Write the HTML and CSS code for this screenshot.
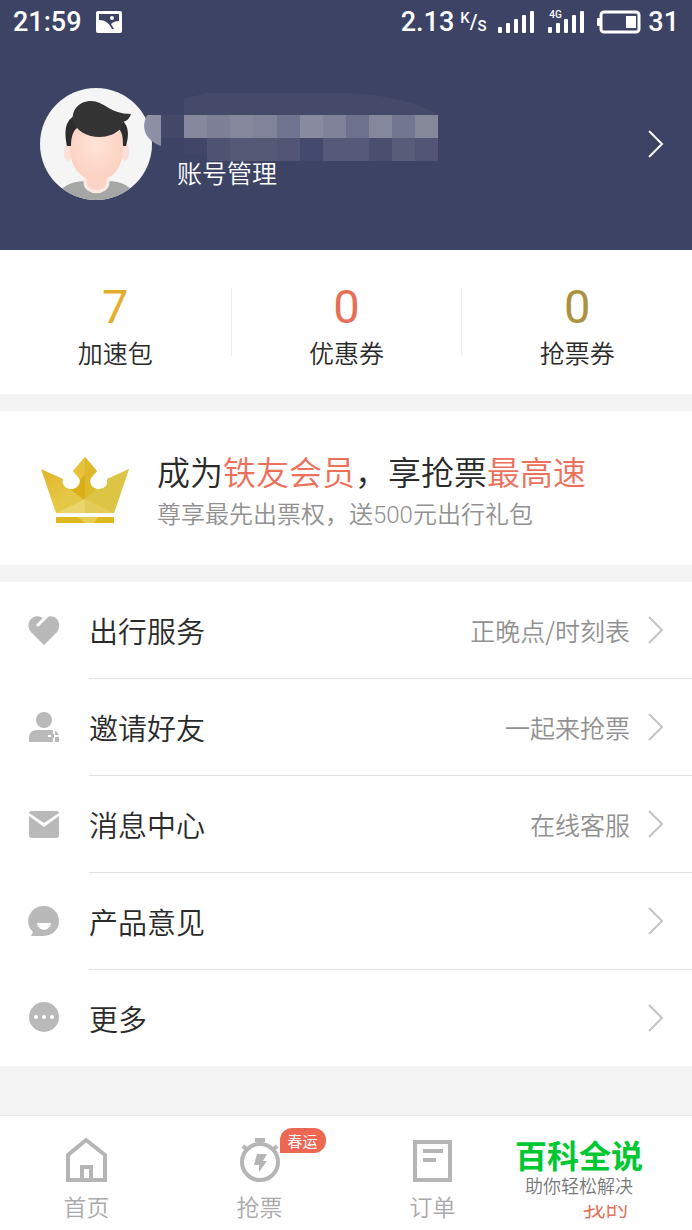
FILE: index.html
```html
<!DOCTYPE html>
<html lang="zh-CN">
<head>
<meta charset="utf-8">
<meta name="viewport" content="width=device-width, initial-scale=1">
<title>我的</title>
<link rel="stylesheet" href="styles.css">
</head>
<body>
<div class="app">
  <header class="header">
    <div class="status">
      <div class="status-group">
        <span>21:59</span>
        <svg class="status-picture" width="26" height="22" viewBox="0 0 26 22" aria-hidden="true">
          <rect width="26" height="22" rx="2" fill="#fff"/>
          <path d="M3 3H23V10C20 10 17 11 15 13L18 18L16 18C13 12 9 9 3 9Z" fill="#3d4365"/>
          <circle cx="16" cy="7" r="2" fill="#fff"/>
        </svg>
      </div>
      <div class="status-group">
        <span>2.13</span>
        <span class="rate"><span class="rate-top">K</span><span class="rate-slash">/</span><span class="rate-bottom">S</span></span>
        <svg class="signal" width="36" height="24" viewBox="0 0 36 24" fill="#fff" aria-hidden="true">
          <rect x="0" y="17" width="4" height="6" rx="1"/><rect x="8" y="13" width="4" height="10" rx="1"/><rect x="16" y="9" width="4" height="14" rx="1"/><rect x="24" y="5" width="4" height="18" rx="1"/><rect x="32" y="1" width="4" height="22" rx="1"/>
        </svg>
        <span class="signal-4g">
          <svg width="36" height="24" viewBox="0 0 36 24" fill="#fff" aria-hidden="true">
            <rect x="0" y="17" width="4" height="6" rx="1"/><rect x="8" y="13" width="4" height="10" rx="1"/><rect x="16" y="9" width="4" height="14" rx="1"/><rect x="24" y="5" width="4" height="18" rx="1"/><rect x="32" y="1" width="4" height="22" rx="1"/>
          </svg>
          <span class="signal-tag">4G</span>
        </span>
        <svg class="battery" width="44" height="24" viewBox="0 0 44 24" aria-hidden="true">
          <rect x="4" y="2" width="38" height="20" rx="3" fill="none" stroke="#fff" stroke-width="3"/>
          <rect x="0" y="8" width="4" height="8" rx="1" fill="#fff"/>
          <rect x="29" y="6" width="10" height="12" fill="#fff"/>
        </svg>
        <span>31</span>
      </div>
    </div>
    <a class="profile" href="#account">
      <svg class="avatar" width="112" height="112" viewBox="0 0 112 112" aria-hidden="true">
        <defs>
          <clipPath id="face-clip"><circle cx="56" cy="56" r="56"/></clipPath>
          <radialGradient id="skin" cx="50%" cy="45%" r="60%"><stop offset="0" stop-color="#ffe3d8"/><stop offset="1" stop-color="#fbd0bf"/></radialGradient>
        </defs>
        <g clip-path="url(#face-clip)">
          <rect width="112" height="112" fill="#f5f5f6"/>
          <path d="M14 112C20 98 32 93 46 93H67C82 93 92 98 98 112Z" fill="#a5a6a6"/>
          <path d="M45 88V94C45 107 68 107 68 94V88Z" fill="#fbd3c4" stroke="#fcebe4" stroke-width="3"/>
          <ellipse cx="28" cy="64" rx="4" ry="9" fill="#fce0d5"/><ellipse cx="85" cy="64" rx="4" ry="9" fill="#fce0d5"/>
          <path d="M30 56C30 36 40 31 57 31S83 36 83 56C84 81 72 92 57 92S29 81 30 56Z" fill="url(#skin)"/>
          <path d="M36 27C25 32 24 43 27 58H31C31 49 33 43 37 40ZM83 33C89 39 89 48 86 58H83C83 49 82 44 79 41Z" fill="#2c2c2d"/>
          <path d="M33 34C31 22 39 13 51 13C64 13 70 26 91 26C89 32 85 34 82 34C86 37 76 49 60 49C45 49 37 42 33 34Z" fill="#333334"/>
        </g>
      </svg>
      <span class="profile-text">账号管理</span>
      <svg class="mosaic" width="296" height="68" viewBox="0 0 296 68" aria-hidden="true">
        <path d="M41 6 64 0H205C240 2 273 8 295 22H41Z" fill="#454a6a"/>
        <path d="M4 22H18V53C6 49 -4 38 4 22Z" fill="#8d8fa4"/>
        <rect x="18" y="22" width="23" height="23" fill="#444969"/>
        <rect x="41" y="22" width="23" height="23" fill="#85889d"/><rect x="64" y="22" width="23" height="23" fill="#7d8096"/><rect x="87" y="22" width="23" height="23" fill="#85889b"/><rect x="110" y="22" width="24" height="23" fill="#808399"/><rect x="134" y="22" width="23" height="23" fill="#707490"/><rect x="157" y="22" width="23" height="23" fill="#898c9f"/><rect x="180" y="22" width="23" height="23" fill="#7f8298"/><rect x="203" y="22" width="23" height="23" fill="#6e718e"/><rect x="226" y="22" width="23" height="23" fill="#85889c"/><rect x="249" y="22" width="23" height="23" fill="#73768f"/><rect x="272" y="22" width="23" height="23" fill="#858899"/>
        <rect x="41" y="45" width="23" height="17" fill="#414668"/>
        <rect x="64" y="45" width="23" height="23" fill="#505473"/><rect x="87" y="45" width="47" height="23" fill="#555976"/><rect x="134" y="45" width="23" height="23" fill="#525674"/><rect x="157" y="45" width="23" height="23" fill="#444a6d"/><rect x="180" y="45" width="46" height="23" fill="#565a78"/><rect x="226" y="45" width="23" height="23" fill="#4a4f70"/><rect x="249" y="45" width="23" height="23" fill="#585c79"/><rect x="272" y="45" width="23" height="23" fill="#525674"/>
      </svg>
      <svg class="chevron" width="16" height="28" viewBox="0 0 16 28" aria-hidden="true"><path d="M1 1 14 14 1 27"/></svg>
    </a>
  </header>

  <main class="content">
    <section class="stats">
      <a class="stat" href="#boost"><span class="stat-number gold">7</span><span class="stat-label">加速包</span></a>
      <a class="stat" href="#coupon"><span class="stat-number coral">0</span><span class="stat-label">优惠券</span></a>
      <a class="stat" href="#ticket-coupon"><span class="stat-number olive">0</span><span class="stat-label">抢票券</span></a>
    </section>

    <a class="vip" href="#vip">
      <svg class="crown" width="90" height="68" viewBox="0 0 90 68" aria-hidden="true">
        <defs>
          <linearGradient id="gold" x1="0" y1="0" x2="1" y2="1"><stop offset="0" stop-color="#dfae20"/><stop offset=".5" stop-color="#e6c847"/><stop offset="1" stop-color="#d8bd32"/></linearGradient>
          <clipPath id="crown-clip"><path d="M1 13 23 23C22 28 24 32 30 33C37 34 42 27 39 22L33 15 45 1 57 15 51 22C48 27 53 34 60 33C66 32 68 28 67 23L89 13 74 57H16Z"/></clipPath>
        </defs>
        <g clip-path="url(#crown-clip)">
          <rect width="90" height="60" fill="url(#gold)"/>
          <path d="M45 1 33 15 40 25 45 18Z" fill="#e8c03a"/>
          <path d="M45 0V45L60 34 58 0Z" fill="#ddb92c"/>
          <path d="M40 24 45 18V45L30 33Z" fill="#dbae17"/>
          <path d="M45 43 76 58H14Z" fill="#ead56c"/>
          <path d="M45 43 76 58H45Z" fill="#e3cb58"/>
          <path d="M67 23 89 13 74 57 45 43Z" fill="#dcc545"/>
        </g>
        <path d="M16 61H74V67H16Z" fill="#dfb71f"/><path d="M38 61H58L54 67H45Z" fill="#e8cd54"/>
      </svg>
      <div class="vip-text">
        <p class="vip-title">成为<em>铁友会员</em>，享抢票<em>最高速</em></p>
        <p class="vip-sub">尊享最先出票权，送500元出行礼包</p>
      </div>
    </a>

    <nav class="menu" aria-label="服务">
      <a class="row" href="#travel">
        <svg class="row-icon" viewBox="0 0 32 32" aria-hidden="true"><path d="M16 30 3 17C-1 12 0 6 4 3C8 0 13 1 16 4C20 0 26 1 29 4C32 8 32 13 29 17Z"/><path d="M19 1 10 10" fill="none" stroke="#fff" stroke-width="3" stroke-linecap="round"/></svg>
        <div class="row-body"><span class="row-label">出行服务</span><span class="row-value">正晚点/时刻表</span><svg class="chevron" width="16" height="28" viewBox="0 0 16 28" aria-hidden="true"><path d="M1 1 14 14 1 27"/></svg></div>
      </a>
      <a class="row" href="#invite">
        <svg class="row-icon" viewBox="0 0 32 32" aria-hidden="true"><circle cx="16" cy="8" r="8"/><path d="M1 30V26C1 21 4 18 9 18H24C28 18 31 21 31 25V30Z"/><path d="M20 24H32M26 18V31" stroke="#fff" stroke-width="2"/><path d="M23 22H26V26H23Z"/></svg>
        <div class="row-body"><span class="row-label">邀请好友</span><span class="row-value">一起来抢票</span><svg class="chevron" width="16" height="28" viewBox="0 0 16 28" aria-hidden="true"><path d="M1 1 14 14 1 27"/></svg></div>
      </a>
      <a class="row" href="#messages">
        <svg class="row-icon" viewBox="0 0 32 32" aria-hidden="true"><path d="M4 2H28C30 2 31 3 31 4L16 14 1 4C1 3 2 2 4 2ZM1 7 16 18 31 7V26C31 28 30 29 28 29H4C2 29 1 28 1 26Z"/></svg>
        <div class="row-body"><span class="row-label">消息中心</span><span class="row-value">在线客服</span><svg class="chevron" width="16" height="28" viewBox="0 0 16 28" aria-hidden="true"><path d="M1 1 14 14 1 27"/></svg></div>
      </a>
      <a class="row" href="#feedback">
        <svg class="row-icon" viewBox="0 0 32 32" aria-hidden="true"><path fill-rule="evenodd" d="M16 0A15 15 0 1 1 16 30H3L5 26A15 15 0 0 1 16 0ZM9 17C10 26 22 26 23 17Z"/></svg>
        <div class="row-body"><span class="row-label">产品意见</span><svg class="chevron" width="16" height="28" viewBox="0 0 16 28" aria-hidden="true"><path d="M1 1 14 14 1 27"/></svg></div>
      </a>
      <a class="row" href="#more">
        <svg class="row-icon" viewBox="0 0 32 32" aria-hidden="true"><circle cx="16" cy="15" r="15"/><g fill="#fff"><circle cx="8" cy="15" r="2"/><circle cx="16" cy="15" r="2"/><circle cx="24" cy="15" r="2"/></g></svg>
        <div class="row-body"><span class="row-label">更多</span><svg class="chevron" width="16" height="28" viewBox="0 0 16 28" aria-hidden="true"><path d="M1 1 14 14 1 27"/></svg></div>
      </a>
    </nav>
  </main>

  <nav class="tabs" aria-label="主导航">
    <a class="tab" href="#home">
      <svg width="48" height="48" viewBox="0 0 48 48" fill="none" stroke="#b5b5b5" stroke-width="4" aria-hidden="true"><path d="M5 44V19L23 4 42 19V44Z"/><path d="M19 43V31H28V43"/></svg>
      <span>首页</span>
    </a>
    <a class="tab" href="#grab">
      <svg width="48" height="48" viewBox="0 0 48 48" fill="none" stroke="#b5b5b5" stroke-width="4" aria-hidden="true"><circle cx="24" cy="26" r="18"/><path d="M19 4H29M7 10 12 15M41 10 36 15"/><path d="M21 18H31L27 25H31L23 36V29H18Z" fill="#b5b5b5" stroke="none"/></svg>
      <span>抢票</span>
      <b class="badge">春运</b>
    </a>
    <a class="tab" href="#orders">
      <svg width="48" height="48" viewBox="0 0 48 48" fill="none" stroke="#b5b5b5" stroke-width="4" aria-hidden="true"><path d="M6 6H41V44H6Z"/><path d="M14 15H34M14 24H27"/></svg>
      <span>订单</span>
    </a>
    <a class="tab active" href="#mine">
      <svg width="48" height="48" viewBox="0 0 48 48" aria-hidden="true"></svg>
      <span>我的</span>
      <div class="brand"><strong>百科全说</strong><small>助你轻松解决</small></div>
    </a>
  </nav>
</div>
</body>
</html>
```
FILE: styles.css
```css
* {
  box-sizing: border-box;
}

body {
  margin: 0;
  background: #f3f3f3;
  color: #2a2a2a;
  font-family: "Noto Sans CJK SC", sans-serif;
  font-weight: 350;
}

a {
  color: inherit;
  text-decoration: none;
}

p {
  margin: 0;
}

svg {
  display: block;
  flex: none;
}

.app {
  display: flex;
  flex-direction: column;
  min-height: 100vh;
}

.header {
  background: #3d4365;
  color: #fff;
  padding-bottom: 50px;
}

.status {
  display: flex;
  justify-content: space-between;
  padding: 0 13px;
  font: 500 27px/44px Roboto, sans-serif;
}

.status-group {
  display: flex;
  align-items: center;
}

.status-picture {
  margin-left: 14px;
}

.rate {
  display: flex;
  width: 24px;
  margin: 0 14px 0 6px;
  font-size: 15px;
  line-height: 20px;
}

.rate-top {
  padding-bottom: 8px;
}

.rate-slash {
  padding-top: 4px;
  font-size: 20px;
}

.rate-bottom {
  padding-top: 8px;
}

.signal-4g {
  position: relative;
  margin: 0 13px 0 14px;
}

.signal-tag {
  position: absolute;
  top: 0;
  left: 1px;
  font-size: 10px;
  line-height: 10px;
}

.battery {
  margin-right: 7px;
}

.profile {
  position: relative;
  display: flex;
  align-items: center;
  gap: 25px;
  margin-top: 44px;
  padding: 0 28px 0 40px;
}

.profile-text {
  flex: 1;
  padding-top: 56px;
  font-size: 25px;
  line-height: 32px;
}

.mosaic {
  position: absolute;
  top: 5px;
  left: 143px;
}

.chevron {
  fill: none;
  stroke: #c4c4c4;
  stroke-width: 2;
}

.profile .chevron {
  stroke: #fff;
}

.content {
  display: flex;
  flex-direction: column;
  gap: 17px;
}

.stats {
  display: grid;
  grid-template-columns: repeat(3, 1fr);
  padding: 38px 0;
  background: #fff;
}

.stat {
  display: flex;
  flex-direction: column;
  align-items: center;
  height: 68px;
}

.stat + .stat {
  border-left: 1px solid #ededed;
}

.stat-number {
  font: 400 47px/38px Roboto, sans-serif;
}

.stat-label {
  margin-top: 10px;
  font-size: 25px;
  line-height: 32px;
}

.gold {
  color: #e3ae2c;
}

.coral {
  color: #e66f57;
}

.olive {
  color: #aa933e;
}

.vip {
  display: flex;
  align-items: center;
  gap: 27px;
  padding: 36px 40px 32px;
  background: #fff;
}

.vip-title {
  font-size: 33px;
  line-height: 48px;
}

.vip-title em {
  color: #ed705a;
  font-style: normal;
}

.vip-sub {
  padding-top: 2px;
  color: #919191;
  font-family: Roboto, "Noto Sans CJK SC", sans-serif;
  font-size: 24px;
  line-height: 36px;
}

.menu {
  background: #fff;
}

.row {
  display: flex;
  align-items: center;
  gap: 29px;
  padding-left: 28px;
}

.row-icon {
  width: 32px;
  height: 32px;
  fill: #b9b9b9;
}

.row-body {
  display: flex;
  flex: 1;
  align-items: center;
  height: 97px;
  padding-right: 28px;
  border-bottom: 1px solid #e3e3e3;
}

.row:last-child .row-body {
  height: 96px;
  border-bottom: 0;
}

.row-label {
  flex: 1;
  font-size: 29px;
  line-height: 40px;
}

.row-value {
  margin-right: 18px;
  color: #919191;
  font-size: 25px;
  line-height: 32px;
}

.tabs {
  display: grid;
  grid-template-columns: repeat(4, 1fr);
  margin-top: auto;
  border-top: 1px solid #e8e8e8;
  background: #fff;
}

.tab {
  position: relative;
  display: flex;
  flex-direction: column;
  align-items: center;
  gap: 10px;
  padding: 20px 0 12px;
  color: #aaa;
  font-size: 23px;
  line-height: 24px;
}

.tab.active {
  color: #e66f57;
}

.badge {
  position: absolute;
  top: 12px;
  left: calc(50% + 20px);
  padding: 0 8px;
  border-radius: 12px 12px 12px 0;
  background: #ed6852;
  color: #fff;
  font-size: 15px;
  font-weight: 400;
  line-height: 25px;
}

.brand {
  position: absolute;
  top: 15px;
  right: 39px;
  left: -14px;
  display: flex;
  flex-direction: column;
  align-items: center;
  height: 74px;
  background: #fff;
}

.brand strong {
  color: #00c832;
  font-size: 32px;
  font-weight: 700;
  line-height: 46px;
}

.brand small {
  color: #777;
  font-size: 18px;
  line-height: 16px;
}
```
